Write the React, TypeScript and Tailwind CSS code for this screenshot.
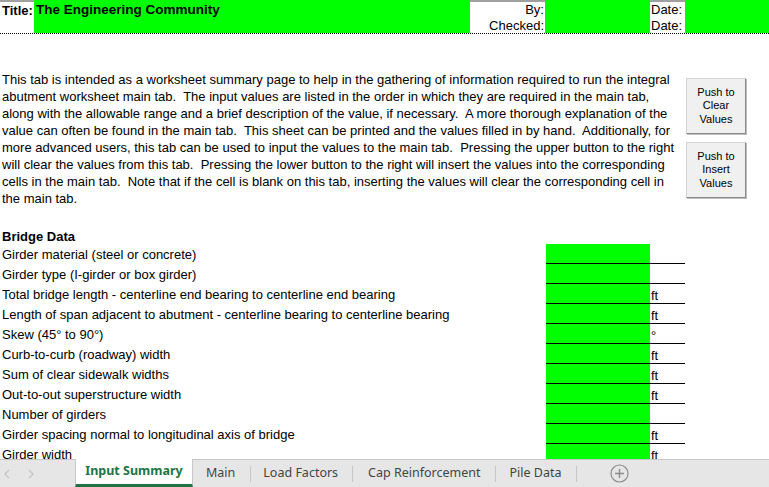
import React from "react";

const lines = [
  "This tab is intended as a worksheet summary page to help in the gathering of information required to run the integral",
  "abutment worksheet main tab.  The input values are listed in the order in which they are required in the main tab,",
  "along with the allowable range and a brief description of the value, if necessary.  A more thorough explanation of the",
  "value can often be found in the main tab.  This sheet can be printed and the values filled in by hand.  Additionally, for",
  "more advanced users, this tab can be used to input the values to the main tab.  Pressing the upper button to the right",
  "will clear the values from this tab.  Pressing the lower button to the right will insert the values into the corresponding",
  "cells in the main tab.  Note that if the cell is blank on this tab, inserting the values will clear the corresponding cell in",
  "the main tab.",
];

const rows: [string, string][] = [
  ["Girder material (steel or concrete)", ""],
  ["Girder type (I-girder or box girder)", ""],
  ["Total bridge length - centerline end bearing to centerline end bearing", "ft"],
  ["Length of span adjacent to abutment - centerline bearing to centerline bearing", "ft"],
  ["Skew (45\u00B0 to 90\u00B0)", "\u00B0"],
  ["Curb-to-curb (roadway) width", "ft"],
  ["Sum of clear sidewalk widths", "ft"],
  ["Out-to-out superstructure width", "ft"],
  ["Number of girders", ""],
  ["Girder spacing normal to longitudinal axis of bridge", "ft"],
  ["Girder width", "ft"],
];

function Btn({ a, b, c }: { a: string; b: string; c: string }) {
  return (
    <div className="w-[60px] h-[56px] bg-[#f0f0f0] border border-[#d4d4d4] border-r-[#8a8a8a] border-b-[#8a8a8a] shadow-[1px_1px_0_#bdbdbd] flex flex-col items-center justify-center text-[11px] leading-[13.5px] text-black">
      <span>{a}</span>
      <span>{b}</span>
      <span>{c}</span>
    </div>
  );
}

function Sep() {
  return <div className="w-px h-[16px] bg-[#c6c6c6]" />;
}

export default function App() {
  return (
    <div className="w-[769px] h-[487px] overflow-hidden bg-white flex flex-col text-black" style={{ fontFamily: '"Liberation Sans", Arial, sans-serif' }}>
      <div className="h-[459px] overflow-hidden">
        {/* header */}
        <div className="h-[34px] flex border-b border-dotted border-black text-[13px] leading-[16px]">
          <div className="w-[34px] border-t-2 border-[#a0a0a0] pl-[2px] pt-[1px] font-bold">Title:</div>
          <div className="w-[436px] bg-[#00ff00] pl-[2px] pt-[2px] font-bold text-[13.5px]">The Engineering Community</div>
          <div className="w-[75px] border-t-2 border-[#a0a0a0] flex flex-col items-end pr-[1px]">
            <span className="h-[16px]">By:</span>
            <span className="h-[16px]">Checked:</span>
          </div>
          <div className="w-[105px] bg-[#00ff00]" />
          <div className="w-[35px] border-t-2 border-[#a0a0a0] flex flex-col pl-[1px]">
            <span className="h-[16px]">Date:</span>
            <span className="h-[16px]">Date:</span>
          </div>
          <div className="flex-1 bg-[#00ff00]" />
        </div>

        {/* description */}
        <div className="mt-[37px] flex">
          <div className="w-[686px] pl-[2px] text-[13px] leading-[17px] whitespace-pre">
            {lines.map((l, i) => (
              <div key={i} className="h-[17px]">{l}</div>
            ))}
          </div>
          <div className="flex flex-col gap-[8px] pt-[7px]">
            <Btn a="Push to" b="Clear" c="Values" />
            <Btn a="Push to" b="Insert" c="Values" />
          </div>
        </div>

        {/* bridge data */}
        <div className="mt-[20px] h-[17px] pl-[2px] pt-[1px] text-[13px] leading-[17px] font-bold">Bridge Data</div>
        <div className="flex flex-col">
          {rows.map(([label, unit], i) => (
            <div key={i} className="h-[20px] flex text-[13px]">
              <div className="w-[546px] pl-[2px] leading-[20px] pt-[1px]">{label}</div>
              <div className="w-[139px] flex border-b border-black">
                <div className="w-[104px] bg-[#00ff00]" />
                <div className="flex-1 pl-[1px] leading-[14px] pt-[5px]">{unit}</div>
              </div>
            </div>
          ))}
        </div>
      </div>

      {/* sheet tabs */}
      <div className="h-[28px] bg-[#e6e6e6] border-t border-[#c6c6c6] flex items-stretch text-[12.5px] text-[#444]" style={{ fontFamily: '"Noto Sans", "Open Sans", sans-serif' }}>
        <div className="w-[75px] flex items-center gap-[16px] pl-[3px]">
          <svg width="8" height="10" viewBox="0 0 8 10"><path d="M6 1 L2 5 L6 9" fill="none" stroke="#c4c4c4" strokeWidth="1.3" /></svg>
          <svg width="8" height="10" viewBox="0 0 8 10"><path d="M2 1 L6 5 L2 9" fill="none" stroke="#c4c4c4" strokeWidth="1.3" /></svg>
        </div>
        <div className="w-[118px] -mt-px bg-white border-x border-[#c6c6c6] border-b-[3px] border-b-[#217346] flex items-center justify-center font-bold text-[#217346] pb-[1px]">
          Input Summary
        </div>
        <div className="flex items-center">
          <div className="pl-[13px] pr-[15px]">Main</div>
          <Sep />
          <div className="pl-[12px] pr-[14px]">Load Factors</div>
          <Sep />
          <div className="pl-[15px] pr-[14px]">Cap Reinforcement</div>
          <Sep />
          <div className="pl-[14px] pr-[14px]">Pile Data</div>
          <Sep />
          <div className="ml-[33px]">
            <svg width="19" height="19" viewBox="0 0 19 19">
              <circle cx="9.5" cy="9.5" r="8.5" fill="none" stroke="#8c8c8c" strokeWidth="1.2" />
              <path d="M9.5 5 V14 M5 9.5 H14" stroke="#8c8c8c" strokeWidth="1.4" />
            </svg>
          </div>
        </div>
      </div>
    </div>
  );
}
